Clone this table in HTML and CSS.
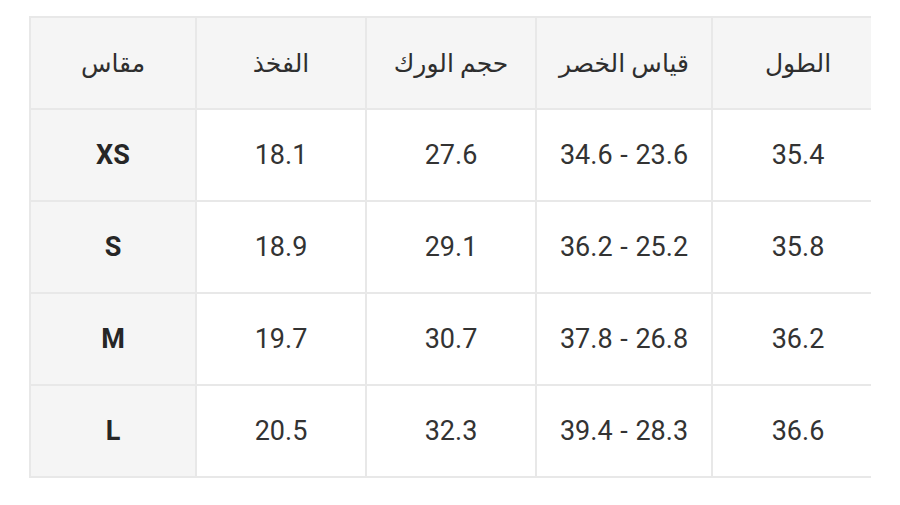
FILE: index.html
```html
<!DOCTYPE html>
<html lang="ar">
<head>
<meta charset="utf-8">
<title>جدول المقاسات</title>
<link rel="stylesheet" href="styles.css">
</head>
<body>
<div class="frame">
  <table class="sizes" dir="rtl">
    <colgroup>
      <col class="c-len">
      <col class="c-waist">
      <col class="c-hip">
      <col class="c-thigh">
      <col class="c-size">
    </colgroup>
    <thead>
      <tr>
        <th>الطول</th>
        <th>قياس الخصر</th>
        <th>حجم الورك</th>
        <th>الفخذ</th>
        <th>مقاس</th>
      </tr>
    </thead>
    <tbody>
      <tr><td>35.4</td><td><span dir="ltr">34.6 - 23.6</span></td><td>27.6</td><td>18.1</td><td class="size">XS</td></tr>
      <tr><td>35.8</td><td><span dir="ltr">36.2 - 25.2</span></td><td>29.1</td><td>18.9</td><td class="size">S</td></tr>
      <tr><td>36.2</td><td><span dir="ltr">37.8 - 26.8</span></td><td>30.7</td><td>19.7</td><td class="size">M</td></tr>
      <tr><td>36.6</td><td><span dir="ltr">39.4 - 28.3</span></td><td>32.3</td><td>20.5</td><td class="size">L</td></tr>
    </tbody>
  </table>
</div>
</body>
</html>
```

FILE: styles.css
```css
html, body {
  margin: 0;
  padding: 0;
  background: #ffffff;
}

.frame {
  margin: 16px 0 0 29px;
  width: 842px;
  overflow: hidden;
}

.sizes {
  border-collapse: collapse;
  table-layout: fixed;
  width: 854px;
  font-family: Roboto, "DejaVu Sans", sans-serif;
  font-size: 27px;
  color: #333333;
}

.c-len { width: 172px; }
.c-waist { width: 176px; }
.c-hip { width: 170px; }
.c-thigh { width: 170px; }
.c-size { width: 166px; }

.sizes th,
.sizes td {
  border: 2px solid #e8e8e8;
  height: 90px;
  padding: 0;
  text-align: center;
  vertical-align: middle;
}

.sizes td span {
  word-spacing: 1px;
}

.sizes th {
  background: #f5f5f5;
  font-weight: normal;
  font-size: 25px;
  color: #2e2e2e;
}

.sizes td.size {
  background: #f5f5f5;
  font-weight: bold;
  color: #262626;
}
```
